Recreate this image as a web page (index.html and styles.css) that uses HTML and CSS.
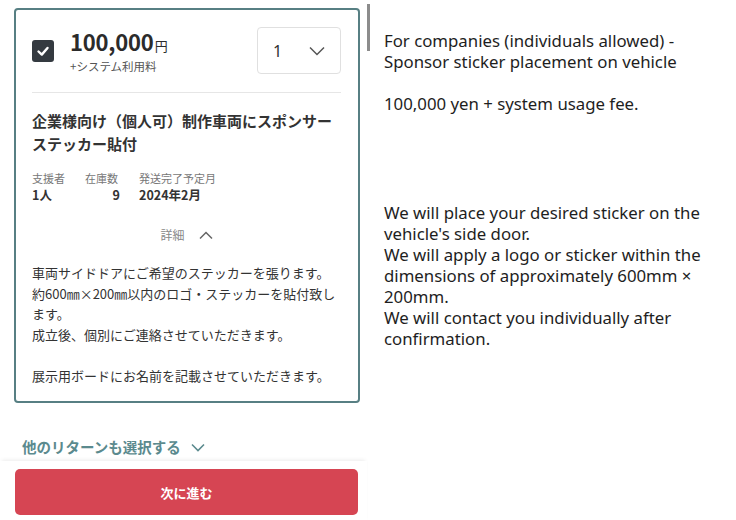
FILE: index.html
```html
<!DOCTYPE html>
<html lang="ja">
<head>
<meta charset="utf-8">
<link rel="stylesheet" href="styles.css">
</head>
<body>
<div class="page">
  <div class="left">
    <div class="card">
      <div class="head">
        <div class="check">
          <svg width="22" height="22" viewBox="0 0 22 22"><rect width="22" height="22" rx="3" fill="#343a40"/><polyline points="6.5,11.5 9.8,14.6 15.5,8" fill="none" stroke="#fff" stroke-width="2.4" stroke-linecap="round" stroke-linejoin="round"/></svg>
        </div>
        <div class="price">
          <div class="amount">100,000<span class="yen">円</span></div>
          <div class="fee">+システム利用料</div>
        </div>
        <div class="select">
          <span class="qty">1</span>
          <svg width="16" height="10" viewBox="0 0 16 10"><polyline points="1,1.5 8,8.5 15,1.5" fill="none" stroke="#555" stroke-width="1.5"/></svg>
        </div>
      </div>
      <h2 class="title">企業様向け（個人可）制作車両にスポンサーステッカー貼付</h2>
      <div class="meta">
        <div class="col c1"><div class="lbl">支援者</div><div class="val">1人</div></div>
        <div class="col c2"><div class="lbl">在庫数</div><div class="val num">9</div></div>
        <div class="col c3"><div class="lbl">発送完了予定月</div><div class="val">2024年2月</div></div>
      </div>
      <div class="detail">
        <span>詳細</span>
        <svg width="14" height="9" viewBox="0 0 14 9"><polyline points="1,7.5 7,1.5 13,7.5" fill="none" stroke="#666" stroke-width="1.5"/></svg>
      </div>
      <div class="desc">
        <p>車両サイドドアにご希望のステッカーを張ります。<br>約600㎜×200㎜以内のロゴ・ステッカーを貼付致します。<br>成立後、個別にご連絡させていただきます。</p>
        <p>展示用ボードにお名前を記載させていただきます。</p>
      </div>
    </div>
    <div class="more">
      <span>他のリターンも選択する</span>
      <svg width="14" height="9" viewBox="0 0 14 9"><polyline points="1,1.5 7,7.5 13,1.5" fill="none" stroke="#5b8a8e" stroke-width="1.6"/></svg>
    </div>
    <div class="footer">
      <button class="next">次に進む</button>
    </div>
  </div>
  <div class="scroll"></div>
  <div class="right">
    <p>For companies (individuals allowed) -<br>Sponsor sticker placement on vehicle</p>
    <p>100,000 yen + system usage fee.</p>
    <p class="gap">We will place your desired sticker on the vehicle's side door.<br>We will apply a logo or sticker within the dimensions of approximately 600mm × 200mm.<br>We will contact you individually after confirmation.</p>
  </div>
</div>
</body>
</html>
```

FILE: styles.css
```css
* { box-sizing: border-box; }
html, body { margin: 0; padding: 0; background: #fff; }
body { font-family: "Noto Sans CJK JP", "Noto Sans", sans-serif; color: #333; }
.page { display: grid; grid-template-columns: 367px 3px 1fr; width: 736px; height: 520px; overflow: hidden; }
.left { padding-top: 8px; display: flex; flex-direction: column; }
.card {
  margin-left: 14px; width: 346px;
  border: 2px solid #577f83; border-radius: 4px;
  padding: 17px 17px 15px 16px;
}
.head { display: flex; align-items: center; }
.check { width: 22px; height: 22px; margin-right: 16px; display: flex; }
.price { flex: 1; }
.amount { font-size: 22px; font-weight: 700; line-height: 24px; color: #2b2b2b; letter-spacing: -0.2px; }
.yen { font-size: 13px; font-weight: 400; margin-left: 1px; }
.fee { font-size: 11.5px; line-height: 14px; color: #555; margin-top: 1px; }
.select {
  width: 84px; height: 47px; border: 1px solid #e0e0e0; border-radius: 4px;
  display: flex; align-items: center; justify-content: space-between;
  padding: 0 15px 0 15px;
}
.qty { font-size: 16px; color: #333; font-family: "Noto Sans", sans-serif; }
.title {
  margin: 18px 0 0; padding-top: 16px; border-top: 1px solid #e6e6e6;
  font-size: 15px; font-weight: 700; line-height: 23px; color: #333;
}
.meta { display: flex; margin-top: 15px; }
.col { display: flex; flex-direction: column; }
.c1 { width: 53px; }
.c2 { width: 54px; }
.lbl { font-size: 11px; line-height: 16px; color: #777; }
.val { font-size: 12.5px; line-height: 18px; font-weight: 700; color: #333; }
.num { text-align: right; padding-right: 19px; }
.detail {
  display: flex; justify-content: center; align-items: center; gap: 14px;
  margin-top: 22px; font-size: 12px; color: #888; line-height: 18px;
}
.desc { margin-top: 19px; font-size: 13px; line-height: 20.5px; color: #333; }
.desc p { margin: 0 0 20.5px; }
.desc p:last-child { margin-bottom: 0; }
.more {
  display: flex; align-items: center; gap: 10px;
  margin: 34px 0 0 22px; font-size: 14.5px; font-weight: 700; color: #5b8a8e; line-height: 20px;
}
.footer {
  margin-top: 4px; padding: 8px 0 0 15px; height: 64px;
  box-shadow: 0 -3px 4px -2px rgba(0,0,0,0.08);
  background: #fff;
}
.next {
  width: 343px; height: 46px; border: 0; border-radius: 5px;
  background: #d64553; color: #fff; font-family: "Noto Sans CJK JP", sans-serif;
  font-size: 13px; font-weight: 700; padding: 0;
}
.scroll { margin-top: 4px; height: 47px; background: #8c8c8c; }
.right {
  padding: 30px 0 0 14px;
  font-family: "Noto Sans", sans-serif; font-size: 16.8px; line-height: 21px; color: #1e1e1e;
}
.right p { margin: 0 0 21px; }
.right .gap { margin-top: 88px; width: 340px; }
```
